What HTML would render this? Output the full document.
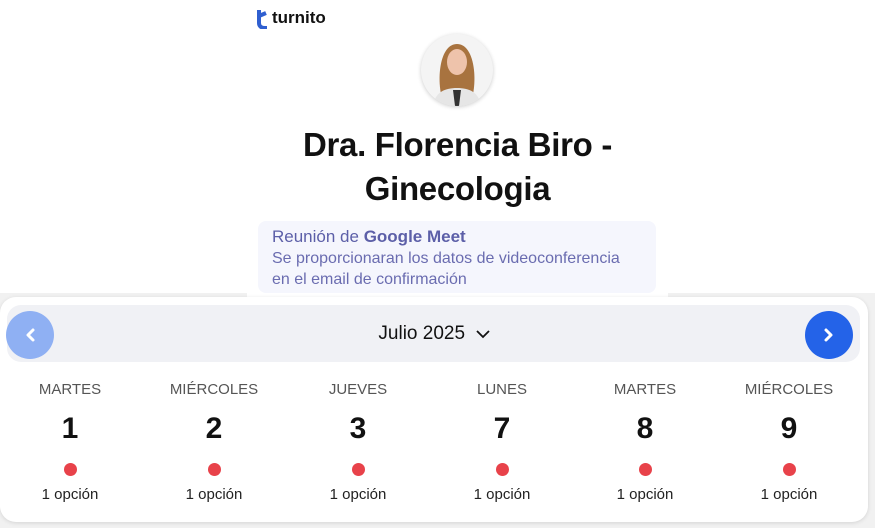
<!DOCTYPE html>
<html><head><meta charset="utf-8"><style>
*{margin:0;padding:0;box-sizing:border-box}
body{width:875px;height:528px;overflow:hidden;background:#fff;font-family:"Liberation Sans",sans-serif;position:relative}
.gray{position:absolute;left:0;top:293px;width:875px;height:235px;background:#f1f1f1}
.white{position:absolute;left:247px;top:0;width:421px;height:300px;background:#fff}
.abs{position:absolute}
.card{position:absolute;left:0;top:297px;width:868px;height:225px;background:#fff;border-radius:16px;box-shadow:0 1px 4px rgba(0,0,0,.12)}
.bar{position:absolute;left:7px;top:8px;width:853px;height:57px;background:#f0f1f5;border-radius:14px}
.btn{position:absolute;top:14px;width:48px;height:48px;border-radius:50%}
.col{position:absolute;width:120px;text-align:center}
.n{font-size:30px;color:#111;font-weight:bold;top:412px}
</style></head><body>
<div class="gray"></div><div class="white"></div>
<div class="abs" style="left:257px;top:9px;width:11px;height:20px">
<svg width="11" height="20" viewBox="0 0 11 20"><path d="M2 1v13c0 3 2 5 6 5h2" stroke="#2f5fd0" stroke-width="4" fill="none"/><path d="M2 7l7-3" stroke="#2f5fd0" stroke-width="4"/></svg></div>
<div class="abs" style="left:272px;top:8px;font-size:17px;font-weight:bold;color:#111">turnito</div>
<div class="abs" style="left:421px;top:34px;width:72px;height:72px;border-radius:50%;overflow:hidden;background:#f4f4f4;box-shadow:0 1px 4px rgba(0,0,0,.2)">
<svg width="72" height="72" viewBox="0 0 72 72"><path d="M20 60C16 40 20 10 36 10s20 30 16 50z" fill="#a8733f"/><ellipse cx="36" cy="28" rx="10" ry="13" fill="#eec3ab"/><path d="M12 72c2-14 12-18 24-18s22 4 24 18z" fill="#e6e6e6"/><path d="M32 56h8l-2 16h-4z" fill="#333"/></svg></div>
<div class="abs" style="left:227px;top:123px;width:461px;text-align:center;font-size:33px;font-weight:bold;color:#111;line-height:44px;letter-spacing:-0.3px">Dra. Florencia Biro -<br>Ginecologia</div>
<div class="abs" style="left:258px;top:221px;width:398px;height:72px;background:#f5f6fd;border-radius:8px;padding:5px 14px;color:#5c5fa8">
<div style="font-size:17px;line-height:22px">Reunión de <b>Google Meet</b></div>
<div style="font-size:16px;line-height:21px;color:#6a6cb0;white-space:nowrap">Se proporcionaran los datos de videoconferencia<br>en el email de confirmación</div></div>
<div class="card">
<div class="bar"></div>
<div class="btn" style="left:6px;background:#8fb0f3"><svg width="48" height="48"><path d="M27 19l-5 5 5 5" stroke="#fff" stroke-width="3" fill="none" stroke-linecap="round" stroke-linejoin="round"/></svg></div>
<div class="btn" style="left:805px;background:#2463e8"><svg width="48" height="48"><path d="M21 19l5 5-5 5" stroke="#fff" stroke-width="3" fill="none" stroke-linecap="round" stroke-linejoin="round"/></svg></div>
<div class="abs" style="left:0;width:868px;top:26px;text-align:center;font-size:19px;color:#111">Julio 2025 &nbsp;<svg width="14" height="9" viewBox="0 0 14 9"><path d="M1 1l6 6 6-6" stroke="#111" stroke-width="1.8" fill="none"/></svg></div>
</div>
<div class="col" style="left:10px;top:381px;color:#555;font-size:15px">MARTES</div>
<div class="col" style="left:154px;top:381px;color:#555;font-size:15px">MIÉRCOLES</div>
<div class="col" style="left:298px;top:381px;color:#555;font-size:15px">JUEVES</div>
<div class="col" style="left:442px;top:381px;color:#555;font-size:15px">LUNES</div>
<div class="col" style="left:585px;top:381px;color:#555;font-size:15px">MARTES</div>
<div class="col" style="left:729px;top:381px;color:#555;font-size:15px">MIÉRCOLES</div>
<div class="col n" style="left:10px">1</div>
<div class="col n" style="left:154px">2</div>
<div class="col n" style="left:298px">3</div>
<div class="col n" style="left:442px">7</div>
<div class="col n" style="left:585px">8</div>
<div class="col n" style="left:729px">9</div>
<div class="abs" style="left:64px;top:463px;width:13px;height:13px;border-radius:50%;background:#e8424a"></div>
<div class="abs" style="left:208px;top:463px;width:13px;height:13px;border-radius:50%;background:#e8424a"></div>
<div class="abs" style="left:352px;top:463px;width:13px;height:13px;border-radius:50%;background:#e8424a"></div>
<div class="abs" style="left:496px;top:463px;width:13px;height:13px;border-radius:50%;background:#e8424a"></div>
<div class="abs" style="left:639px;top:463px;width:13px;height:13px;border-radius:50%;background:#e8424a"></div>
<div class="abs" style="left:783px;top:463px;width:13px;height:13px;border-radius:50%;background:#e8424a"></div>
<div class="col" style="left:10px;top:486px;font-size:15px;color:#222">1 opción</div>
<div class="col" style="left:154px;top:486px;font-size:15px;color:#222">1 opción</div>
<div class="col" style="left:298px;top:486px;font-size:15px;color:#222">1 opción</div>
<div class="col" style="left:442px;top:486px;font-size:15px;color:#222">1 opción</div>
<div class="col" style="left:585px;top:486px;font-size:15px;color:#222">1 opción</div>
<div class="col" style="left:729px;top:486px;font-size:15px;color:#222">1 opción</div>
</body></html>
